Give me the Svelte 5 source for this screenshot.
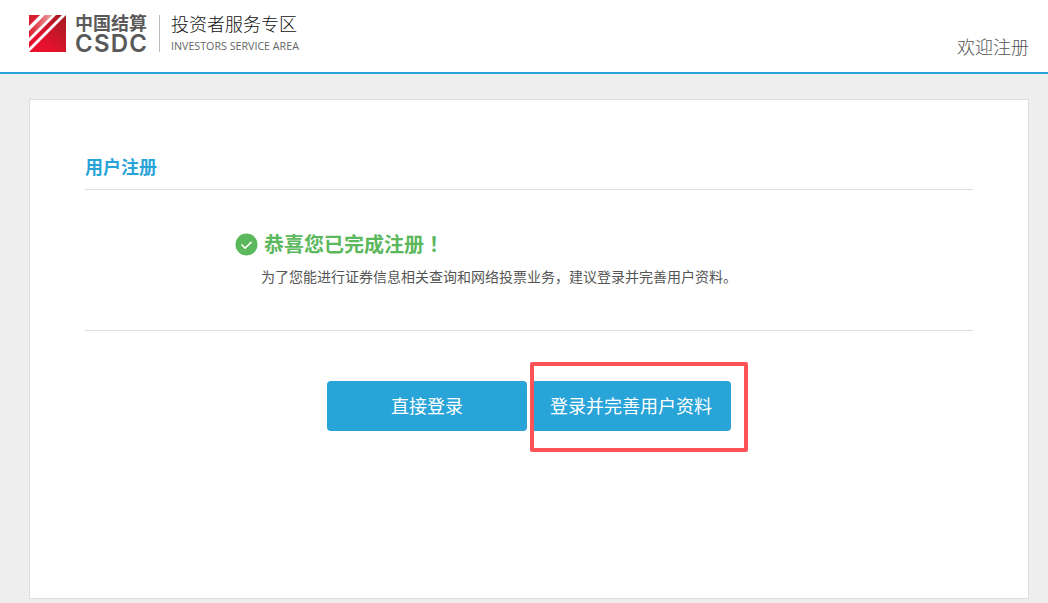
<script>
	let buttons = [
		{ label: '直接登录', marked: false },
		{ label: '登录并完善用户资料', marked: true }
	]
</script>

<div class="page">
	<header class="top">
		<div class="brand">
			<svg class="mark" width="37" height="37" viewBox="0 0 37 37">
				<defs>
					<linearGradient id="red" x1="0" y1="1" x2="1" y2="0">
						<stop offset="0.3" stop-color="#e8112d" />
						<stop offset="1" stop-color="#a01c22" />
					</linearGradient>
					<linearGradient id="pale" x1="0" y1="0" x2="1" y2="0">
						<stop offset="0" stop-color="#d8202f" />
						<stop offset="1" stop-color="#eda0a0" />
					</linearGradient>
				</defs>
				<rect width="37" height="37" fill="url(#red)" />
				<polygon points="0,0 11,0 0,11" fill="#d71f30" />
				<polygon points="16,0 23,0 0,23 0,16" fill="url(#pale)" />
				<polygon points="11,0 16,0 0,16 0,11" fill="#fff" />
				<polygon points="23,0 27,0 0,27 0,23" fill="#fff" />
				<polygon points="33,0 37,0 0,37 0,33" fill="#fff" />
			</svg>
			<div class="org">
				<span class="org-cn">中国结算</span>
				<span class="org-en">CSDC</span>
			</div>
			<div class="area">
				<span class="area-cn">投资者服务专区</span>
				<span class="area-en">INVESTORS SERVICE AREA</span>
			</div>
		</div>
		<div class="welcome">欢迎注册</div>
	</header>

	<main class="body">
		<section class="card">
			<h2 class="title">用户注册</h2>

			<div class="result">
				<div class="done">
					<svg width="23" height="23" viewBox="0 0 23 23">
						<circle cx="11.5" cy="11.5" r="11" fill="#5cb85c" />
						<path d="M6.5 11.5l3.6 3.6 6.4-6.2" fill="none" stroke="#fff" stroke-width="1.5" />
					</svg>
					<span>恭喜您已完成注册<span class="bang">！</span></span>
				</div>
				<p class="hint">为了您能进行证券信息相关查询和网络投票业务，建议登录并完善用户资料。</p>
			</div>

			<div class="actions">
				{#each buttons as b}
					<div class="action">
						<button type="button">{b.label}</button>
						{#if b.marked}
							<span class="marker"></span>
						{/if}
					</div>
				{/each}
			</div>
		</section>
	</main>
</div>

<style>
	:global(body) {
		background: #eee;
		overflow: hidden;
	}

	.page {
		height: 603px;
		overflow: hidden;
		font-family: 'Liberation Sans', 'Noto Sans CJK SC', sans-serif;
	}

	.top {
		height: 72px;
		box-sizing: content-box;
		background: #fff;
		border-bottom: 2px solid #29a4d8;
		padding: 0 19px 0 29px;
		display: flex;
		justify-content: space-between;
	}

	.brand {
		display: flex;
		align-items: flex-start;
		padding-top: 15px;
	}

	.mark {
		display: block;
	}

	.org {
		display: flex;
		flex-direction: column;
		margin-left: 9px;
		width: 73px;
		color: #595959;
		font-weight: 700;
	}

	.org-cn {
		font-size: 18px;
		line-height: 18px;
	}

	.org-en {
		margin-top: 1px;
		font-family: Inter, sans-serif;
		font-size: 24px;
		line-height: 20px;
		font-weight: 600;
		letter-spacing: 1.2px;
		white-space: nowrap;
	}

	.area {
		display: flex;
		flex-direction: column;
		margin-left: 11px;
		padding-left: 11px;
		height: 37px;
		border-left: 1px solid #bbb;
	}

	.area-cn {
		font-size: 18px;
		line-height: 20px;
		font-weight: 300;
		color: #111;
	}

	.area-en {
		margin-top: 1px;
		font-family: 'Open Sans', sans-serif;
		font-size: 10.7px;
		line-height: 20px;
		color: #666;
	}

	.welcome {
		align-self: flex-end;
		padding-bottom: 12px;
		font-size: 18px;
		line-height: 24px;
		font-weight: 300;
		color: #555;
	}

	.body {
		padding: 25px 19px 0 29px;
	}

	.card {
		height: 498px;
		background: #fff;
		border: 1px solid #ddd;
		padding: 0 55px;
	}

	.title {
		margin: 0;
		padding-top: 56px;
		height: 33px;
		box-sizing: content-box;
		border-bottom: 1px solid #ddd;
		font-size: 18px;
		line-height: 24px;
		font-weight: 700;
		color: #29a4d8;
	}

	.result {
		height: 141px;
		box-sizing: border-box;
		padding: 42px 0 0 150px;
		border-bottom: 1px solid #ddd;
	}

	.done {
		display: flex;
		align-items: center;
		gap: 6px;
		font-size: 20px;
		line-height: 24px;
		font-weight: 700;
		color: #5cb85c;
	}

	.bang {
		font-family: 'Noto Sans CJK TC', sans-serif;
	}

	.hint {
		margin: 10px 0 0 26px;
		font-size: 14px;
		line-height: 20px;
		color: #555;
	}

	.actions {
		display: flex;
		justify-content: center;
		gap: 4px;
		padding: 50px 0 0;
	}

	.action {
		position: relative;
	}

	button {
		display: block;
		width: 200px;
		height: 50px;
		padding: 0 0 3px;
		border: 0;
		border-radius: 4px;
		background: #29a4d8;
		color: #fff;
		font: inherit;
		font-size: 18px;
	}

	.marker {
		position: absolute;
		left: -1px;
		top: -19px;
		width: 218px;
		height: 90px;
		box-sizing: border-box;
		border: 4px solid #fb5358;
		border-radius: 2px;
		pointer-events: none;
	}
</style>
